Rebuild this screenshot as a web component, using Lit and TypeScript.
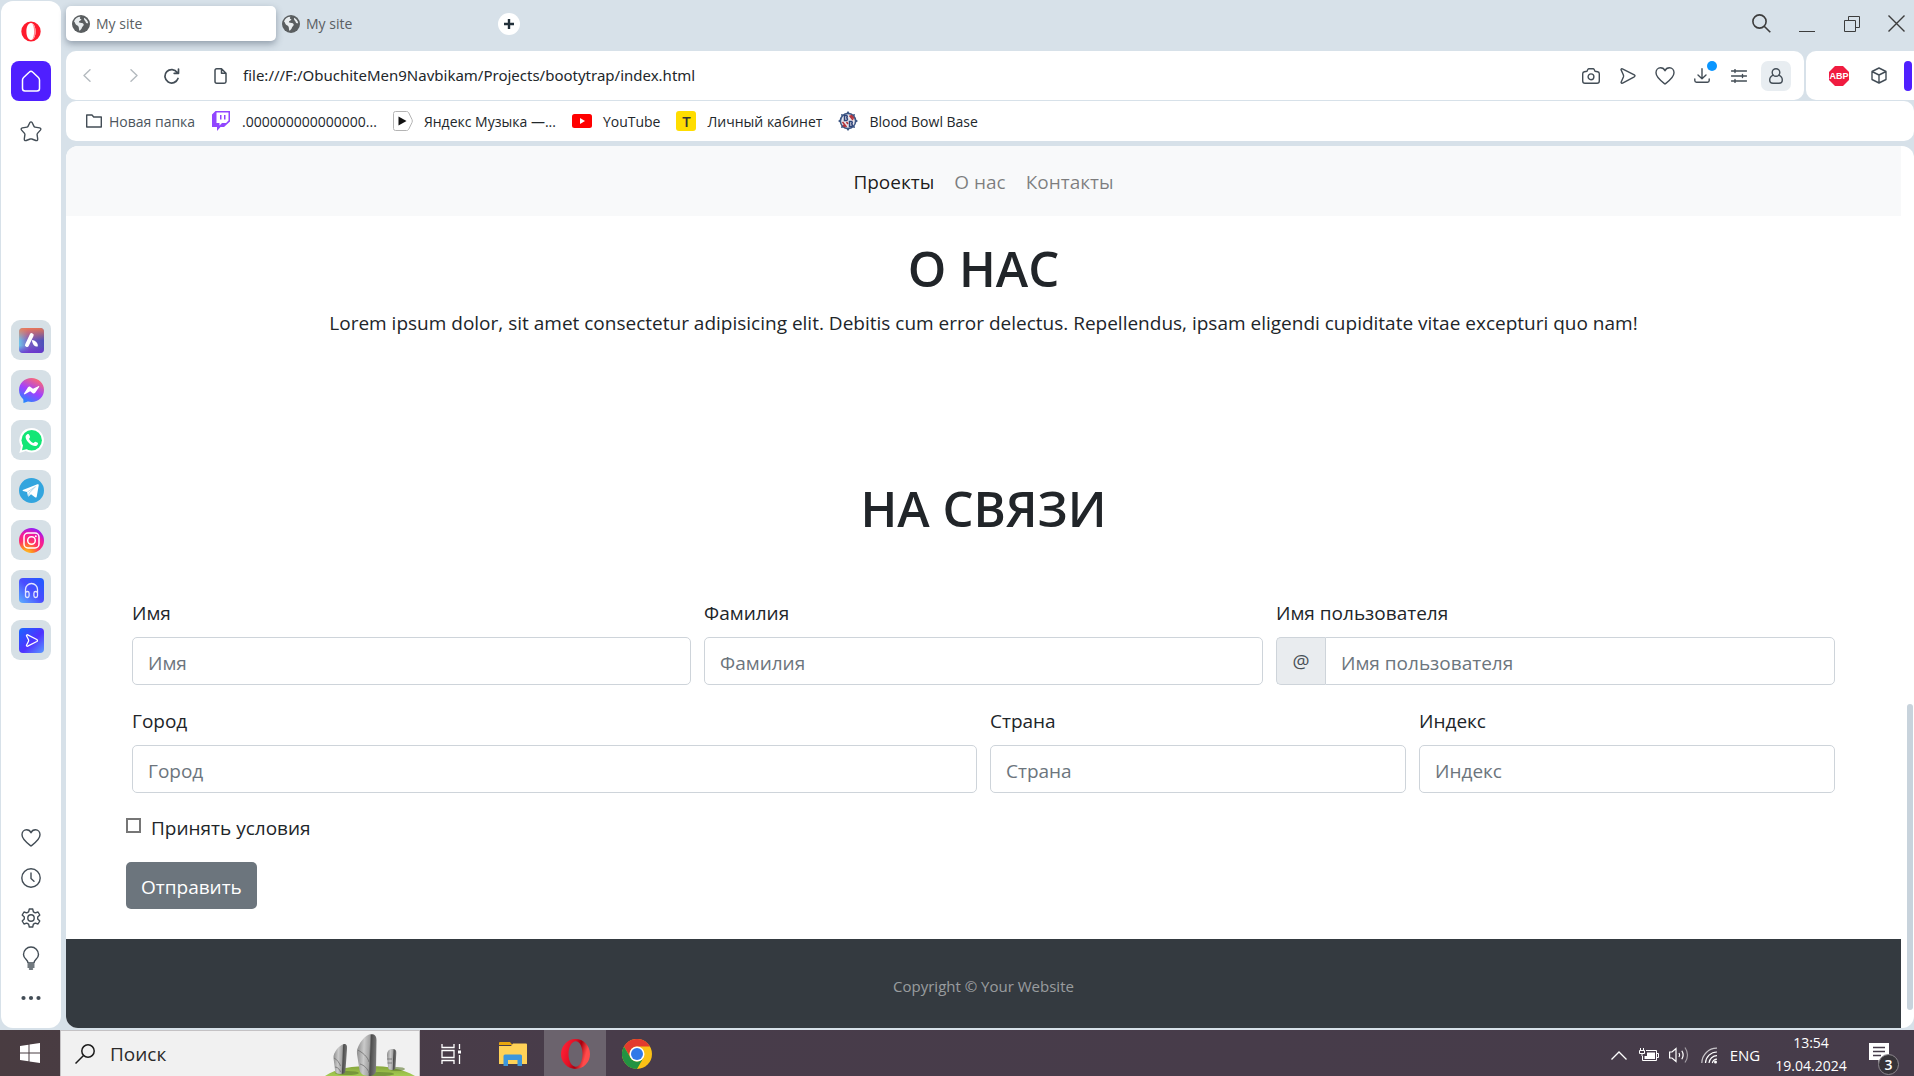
import { LitElement, html, css, TemplateResult } from "lit";
import { customElement } from "lit/decorators.js";

/* ---------- shared styles ---------- */

const base = css`
  *,
  *::before,
  *::after {
    box-sizing: border-box;
  }
  :host {
    font-family: "Open Sans", "Noto Sans", "Liberation Sans", sans-serif;
  }
  button,
  input {
    font: inherit;
    color: inherit;
    margin: 0;
  }
  button {
    border: 0;
    padding: 0;
    background: none;
  }
  a {
    color: inherit;
    text-decoration: none;
  }
  svg {
    display: block;
    flex: none;
  }
  .line {
    fill: none;
    stroke: #434d56;
    stroke-width: 1.4;
    stroke-linecap: round;
    stroke-linejoin: round;
  }
`;

/* ---------- icons ---------- */

const heart = html`<svg class="line" width="20" height="20" viewBox="0 0 20 20">
  <path d="M10 18C6 15 1 11.500 1 6.800C1 3.800 3 1.800 5.500 1.800C7.500 1.800 9.300 3 10 4.800C10.700 3 12.500 1.800 14.500 1.800C17 1.800 19 3.800 19 6.800C19 11.500 14 15 10 18Z" />
</svg>`;

const globe = html`<svg width="18" height="18" viewBox="0 0 18 18">
  <circle cx="9" cy="9" r="9" fill="#5a5e60" />
  <path fill="#e9edef" d="M2 6.500C3 3.500 5.500 1.800 8.500 1.700C7.200 3 8 4 9.500 4.300C8.800 6 7 5.600 6.800 7.200C8.500 8 11 7.500 11.700 9.300C12 10.800 10.400 11.200 10 12.600C9.700 14 8.600 15 7.800 15.800C6.500 15.500 7.300 13 6.600 11.700C5.800 10.300 4 10.300 3.400 8.800C3 7.900 2.800 7 2 6.500Z" />
  <path fill="#e9edef" d="M12 2.700C14.300 3.700 15.900 5.700 16.200 8.200C15.200 8.700 13.900 8 13.600 6.800C13.400 5.600 11.600 5.300 12 2.700Z" />
</svg>`;

const operaO = html`<svg width="20" height="21" viewBox="0 0 20 21">
  <path fill="#ff1b2d" fill-rule="evenodd" d="M10 0.500A9.700 10 0 0 1 10 20.500A9.700 10 0 0 1 10 0.500ZM10 2C7.200 2 5.400 5.800 5.400 10.500S7.200 19 10 19S14.600 15.200 14.600 10.500S12.800 2 10 2Z" />
  <path fill="#ff8a94" d="M11 2.200C13.200 3.200 14.600 6.500 14.600 10.500S13.200 17.800 11 18.800C12.300 17 13.100 14 13.100 10.500S12.300 4 11 2.200Z" />
</svg>`;

const house = html`<svg width="20" height="22" viewBox="0 0 20 22" fill="none" stroke="#fff" stroke-width="1.500" stroke-linejoin="round">
  <path d="M1.500 10C1.500 9 1.900 8.200 2.600 7.500L8.400 2C9.400 1 10.600 1 11.600 2L17.400 7.500C18.100 8.200 18.500 9 18.500 10V18.500C18.500 20 17.500 21 16 21H4C2.500 21 1.500 20 1.500 18.500Z" />
</svg>`;

const star = html`<svg class="line" width="22" height="21" viewBox="0 0 22 21">
  <path d="M9.800 1.700Q11 0 12.200 1.700L14 5.400Q14.300 6 15 6.100L19.600 6.900Q21.600 7.400 20.400 9.100L17.500 12.400Q17 13 17.100 13.700L17.700 18Q17.700 20 15.800 19.500L11.800 18Q11 17.700 10.200 18L6.200 19.500Q4.300 20 4.300 18L4.900 13.700Q5 13 4.500 12.400L1.600 9.100Q0.400 7.400 2.400 6.900L7 6.100Q7.700 6 8 5.400Z" />
</svg>`;

const aria = html`<svg width="25" height="25" viewBox="0 0 25 25">
  <defs>
    <linearGradient id="ariaA" x1="0" y1="0.600" x2="1" y2="0.500">
      <stop offset="0" stop-color="#6fc6e8" />
      <stop offset="0.400" stop-color="#7a5cc4" />
      <stop offset="1" stop-color="#4b50b8" />
    </linearGradient>
    <linearGradient id="ariaB" x1="0.500" y1="0" x2="0.500" y2="1">
      <stop offset="0" stop-color="#ff7a45" />
      <stop offset="0.500" stop-color="#ff7a45" stop-opacity="0" />
      <stop offset="0.700" stop-color="#6a2fd0" stop-opacity="0" />
      <stop offset="1" stop-color="#6a2fd0" />
    </linearGradient>
  </defs>
  <rect width="25" height="25" rx="4" fill="url(#ariaA)" />
  <rect width="25" height="25" rx="4" fill="url(#ariaB)" opacity="0.850" />
  <path d="M12.700 7.200L8 17" stroke="#fff" stroke-width="4" stroke-linecap="round" />
  <path d="M12.800 12C16 12.200 19.500 15 18.700 18.600C15.500 18.800 13.500 16.500 12.800 12Z" fill="#fff" />
</svg>`;

const messenger = html`<svg width="25" height="25" viewBox="0 0 25 25">
  <defs>
    <linearGradient id="msg" x1="0.200" y1="1" x2="0.700" y2="0">
      <stop offset="0" stop-color="#1a8dff" />
      <stop offset="0.500" stop-color="#a040ff" />
      <stop offset="1" stop-color="#ff6a70" />
    </linearGradient>
  </defs>
  <path fill="url(#msg)" d="M12.500 0C19.500 0 25 5.200 25 12S19.500 24 12.500 24C11.200 24 10 23.800 8.900 23.500L4.500 25C4.300 23.800 4.600 22.300 4.200 21.200C1.600 19 0 15.800 0 12C0 5.200 5.500 0 12.500 0Z" />
  <path fill="#fff" d="M5 15.500L9 9.300C9.600 8.500 10.700 8.300 11.500 8.900L14 10.800L19.300 8.200C20 7.900 20.500 8.500 20.100 9.100L16.200 14.800C15.600 15.700 14.500 15.900 13.700 15.200L11.200 13.300L5.900 16.300C5.200 16.600 4.700 16 5 15.500Z" />
</svg>`;

const whatsapp = html`<svg width="25" height="25" viewBox="0 0 25 25">
  <path fill="#fff" d="M12.700 0A12.200 12.200 0 1 1 6.800 22.900L0.300 25L2.100 18.500A12.200 12.200 0 0 1 12.700 0Z" />
  <circle cx="12.700" cy="12.200" r="10.200" fill="#12e676" />
  <path fill="#12e676" d="M3 22.300L4.300 16L8.500 21Z" />
  <path fill="#fff" d="M8.200 6.300C9 5.700 9.800 5.900 10.200 6.800L11 8.800C11.200 9.500 10.300 10.400 10 10.900C11 12.900 12.500 14.200 14.500 15.100C15.200 14.500 15.800 13.500 16.500 13.700L18.700 14.800C19.500 15.300 18.700 17.200 17.600 17.800C15.600 18.700 12.500 17.500 10.200 15.300C7.800 13 6.300 10.400 6.600 8.500C6.800 7.500 7.500 6.800 8.200 6.300Z" />
</svg>`;

const telegram = html`<svg width="25" height="25" viewBox="0 0 25 25">
  <circle cx="12.500" cy="12.500" r="12.500" fill="#33a5de" />
  <path fill="#fff" d="M3.800 12.100L18.400 6.300C19.300 6 19.900 6.500 19.700 7.600L17.700 18.700C17.500 19.600 16.800 19.800 16 19.300L12 16.300L9.900 18.300C9.500 18.700 9 18.500 8.900 18L8 14L4 12.900C3.400 12.700 3.400 12.300 3.800 12.100Z" />
  <path stroke="#b9d9ea" d="M8.300 14L16.500 8.700L10.300 15L9.500 18" fill="none" />
</svg>`;

const instagram = html`<svg width="25" height="25" viewBox="0 0 25 25">
  <defs>
    <radialGradient id="insta" cx="0.300" cy="1.050" r="1.100">
      <stop offset="0" stop-color="#ffd02e" />
      <stop offset="0.250" stop-color="#ff8a1f" />
      <stop offset="0.500" stop-color="#ff2f6a" />
      <stop offset="0.750" stop-color="#f11aa0" />
      <stop offset="1" stop-color="#8a1cff" />
    </radialGradient>
  </defs>
  <circle cx="12.500" cy="12.500" r="12.500" fill="url(#insta)" />
  <g fill="none" stroke="#fff" stroke-width="1.500">
    <rect x="5" y="5" width="15" height="15" rx="4" />
    <circle cx="12.500" cy="12.500" r="3.800" />
  </g>
  <circle cx="16.800" cy="8.200" r="1" fill="#fff" />
</svg>`;

const headphones = html`<svg width="25" height="25" viewBox="0 0 25 25">
  <defs>
    <linearGradient id="blueA" x1="0" y1="1" x2="1" y2="0">
      <stop offset="0" stop-color="#5cb2ff" />
      <stop offset="0.500" stop-color="#4a4cff" />
      <stop offset="1" stop-color="#1c5cff" />
    </linearGradient>
  </defs>
  <rect width="25" height="25" rx="4" fill="url(#blueA)" />
  <g fill="none" stroke="#e3e6ff" stroke-width="1.300">
    <path d="M6.500 15V11.500A6 6 0 0 1 18.500 11.500V15" />
    <rect x="6.500" y="13.500" width="3.600" height="6" rx="1.700" />
    <rect x="14.900" y="13.500" width="3.600" height="6" rx="1.700" />
  </g>
</svg>`;

const flow = html`<svg width="25" height="25" viewBox="0 0 25 25">
  <defs>
    <linearGradient id="blueB" x1="0" y1="0" x2="1" y2="1">
      <stop offset="0" stop-color="#1768ff" />
      <stop offset="0.550" stop-color="#5032ff" />
      <stop offset="1" stop-color="#5a9bff" />
    </linearGradient>
  </defs>
  <rect width="25" height="25" rx="4" fill="url(#blueB)" />
  <path fill="none" stroke="#fff" stroke-width="1.300" stroke-linejoin="round" d="M7.500 7.800C7.300 7 8 6.600 8.700 6.800L17.800 11.500C18.700 12 18.700 13 17.800 13.500L8.700 18.200C8 18.500 7.300 18 7.500 17.200L9.500 13.300C9.800 12.700 9.800 12.300 9.500 11.700Z" />
</svg>`;

const clock = html`<svg class="line" width="20" height="20" viewBox="0 0 20 20">
  <circle cx="10" cy="10" r="9.200" /><path d="M10 5V10.500L13 13.200" />
</svg>`;

const gear = html`<svg class="line" width="20" height="20" viewBox="0 0 20 20">
  <circle cx="10" cy="10" r="3.200" />
  <path d="M8.300 1H11.700L12.400 3.800L14.300 4.900L17 4L18.800 7L16.700 9V11L18.800 13L17 16L14.300 15.100L12.400 16.200L11.700 19H8.300L7.600 16.200L5.700 15.100L3 16L1.200 13L3.300 11V9L1.200 7L3 4L5.700 4.900L7.600 3.800Z" />
</svg>`;

const bulb = html`<svg class="line" width="18" height="24" viewBox="0 0 18 24">
  <path d="M6 17C6 13.500 1.500 13 1.500 8.500A7.500 7.500 0 0 1 16.500 8.500C16.500 13 12 13.500 12 17Z" />
  <path d="M6 19H12M6 21H12M7.500 23H10.500" />
</svg>`;

const dots = html`<svg width="20" height="6" viewBox="0 0 20 6" fill="#434d56">
  <circle cx="2.500" cy="3" r="2.100" /><circle cx="10" cy="3" r="2.100" /><circle cx="17.500" cy="3" r="2.100" />
</svg>`;

/* ---------- left browser panel ---------- */

@customElement("side-panel")
class SidePanel extends LitElement {
  static styles = [
    base,
    css`
      :host {
        display: flex;
        flex-direction: column;
        align-items: center;
        background: #fff;
        border-radius: 12px;
        padding: 10px 0;
      }
      .item {
        width: 40px;
        height: 40px;
        display: flex;
        align-items: center;
        justify-content: center;
      }
      .group {
        display: flex;
        flex-direction: column;
        gap: 10px;
      }
      .home {
        background: #4f1fff;
        border-radius: 8px;
      }
      .apps {
        margin-top: 169px;
      }
      .app {
        background: #d6e0e6;
        border-radius: 9px;
      }
      .tools {
        margin-top: auto;
        gap: 0;
      }
    `,
  ];

  render() {
    const apps: [string, TemplateResult][] = [
      ["Aria", aria],
      ["Messenger", messenger],
      ["WhatsApp", whatsapp],
      ["Telegram", telegram],
      ["Instagram", instagram],
      ["Player", headphones],
      ["Flow", flow],
    ];
    const tools: [string, TemplateResult][] = [
      ["Favorites", heart],
      ["History", clock],
      ["Settings", gear],
      ["Tips", bulb],
      ["More", dots],
    ];
    return html`
      <div class="group">
        <button class="item" aria-label="Opera">${operaO}</button>
        <button class="item home" aria-label="Home">${house}</button>
        <button class="item" aria-label="Bookmarks">${star}</button>
      </div>
      <div class="group apps">
        ${apps.map(([n, i]) => html`<button class="item app" aria-label=${n}>${i}</button>`)}
      </div>
      <div class="group tools">
        ${tools.map(([n, i]) => html`<button class="item" aria-label=${n}>${i}</button>`)}
      </div>
    `;
  }
}

/* ---------- tabs, address bar, bookmarks ---------- */

@customElement("browser-chrome")
class BrowserChrome extends LitElement {
  static styles = [
    base,
    css`
      :host {
        display: flex;
        flex-direction: column;
        color: #22272b;
      }
      .tabs {
        display: flex;
        align-items: center;
        height: 51px;
        padding: 0 0 4px;
      }
      .tab {
        display: flex;
        align-items: center;
        gap: 6px;
        width: 210px;
        height: 35px;
        padding-left: 6px;
        font-size: 14px;
        color: #5a5f63;
        border-radius: 5px;
      }
      .active {
        background: #fff;
        box-shadow: 0 3px 7px rgba(60, 75, 95, 0.45);
      }
      .plus {
        width: 22px;
        height: 22px;
        border-radius: 50%;
        background: #fff;
        display: flex;
        align-items: center;
        justify-content: center;
        margin-left: 12px;
      }
      .window {
        display: flex;
        gap: 10px;
        margin-left: auto;
      }
      .window button {
        width: 35px;
        height: 40px;
        display: flex;
        align-items: center;
        justify-content: center;
      }
      .window .line {
        stroke: #3c3c3c;
        stroke-linecap: butt;
        stroke-linejoin: miter;
      }
      .bar {
        display: flex;
        gap: 2px;
        height: 49px;
      }
      .address {
        flex: 1;
        display: flex;
        align-items: center;
        background: #fff;
        border-radius: 10px;
        padding-right: 13px;
      }
      .nav {
        width: 38px;
        height: 36px;
        display: flex;
        align-items: center;
        justify-content: center;
      }
      .back {
        margin: 0 9px 0 2px;
      }
      .file {
        margin-left: 10px;
      }
      .off .line {
        stroke: #b4babf;
      }
      .url {
        flex: 1;
        border: 0;
        outline: 0;
        padding: 0 4px 1px;
        font-family: "Noto Sans", "Open Sans", sans-serif;
        font-size: 15px;
        background: none;
        min-width: 0;
      }
      .actions {
        display: flex;
        gap: 7px;
      }
      .action {
        width: 30px;
        height: 30px;
        display: flex;
        align-items: center;
        justify-content: center;
        border-radius: 7px;
        position: relative;
      }
      .user {
        background: #e8edf1;
      }
      .dot {
        position: absolute;
        top: 0;
        right: 0;
        width: 10px;
        height: 10px;
        border-radius: 50%;
        background: #0a96ff;
      }
      .extra {
        width: 108px;
        background: #fff;
        border-radius: 10px 0 0 10px;
        display: flex;
        align-items: center;
        gap: 10px;
        padding-left: 18px;
      }
      .accent {
        width: 8px;
        height: 30px;
        border-radius: 4px;
        background: #4f1fff;
      }
      .marks {
        display: flex;
        align-items: center;
        gap: 16px;
        height: 40px;
        margin-top: 1px;
        padding-left: 20px;
        background: #fff;
        border-radius: 10px;
        font-size: 14px;
      }
      .mark {
        display: flex;
        align-items: center;
        gap: 11px;
        white-space: nowrap;
      }
      .folder {
        gap: 7px;
        color: #4c555d;
      }
      .badge-t {
        width: 20px;
        height: 20px;
        border-radius: 3px;
        background: #ffdd00;
        color: #333;
        font-size: 15px;
        line-height: 20px;
        font-weight: 600;
        text-align: center;
      }
      .abp {
        font: bold 9px "Liberation Sans", sans-serif;
        fill: #fff;
      }
    `,
  ];

  render() {
    return html`
      <div class="tabs">
        <button class="tab active">${globe}My site</button>
        <button class="tab">${globe}My site</button>
        <button class="plus" aria-label="New tab">
          <svg width="10" height="10" viewBox="0 0 10 10" stroke="#22303a" stroke-width="2.400"><path d="M5 0V10M0 5H10" /></svg>
        </button>
        <div class="window">
          <button aria-label="Search tabs">
            <svg class="line" width="19" height="19" viewBox="0 0 19 19"><circle cx="7.500" cy="7.500" r="6.600" stroke-width="1.600" /><path d="M12.200 12.200L18.300 18.300" stroke-width="1.600" /></svg>
          </button>
          <button aria-label="Minimize">
            <svg class="line" width="16" height="16" viewBox="0 0 16 16"><path d="M0 15.500H16" stroke-width="1" /></svg>
          </button>
          <button aria-label="Restore">
            <svg class="line" width="16" height="16" viewBox="0 0 16 16"><path d="M0.500 4.500H11.500V15.500H0.500ZM4.500 4.500V0.500H15.500V11.500H11.500" stroke-width="1" /></svg>
          </button>
          <button aria-label="Close">
            <svg class="line" width="17" height="17" viewBox="0 0 17 17"><path d="M0.500 0.500L16.500 16.500M16.500 0.500L0.500 16.500" /></svg>
          </button>
        </div>
      </div>
      <div class="bar">
        <div class="address">
          <button class="nav back off" aria-label="Back">
            <svg class="line" width="8" height="13" viewBox="0 0 8 13"><path d="M7 0.700L1 6.500L7 12.300" /></svg>
          </button>
          <button class="nav off" aria-label="Forward">
            <svg class="line" width="8" height="13" viewBox="0 0 8 13"><path d="M1 0.700L7 6.500L1 12.300" /></svg>
          </button>
          <button class="nav" aria-label="Reload">
            <svg class="line" width="16" height="16" viewBox="0 0 16 16"><path d="M14 10.500A6.700 6.700 0 1 1 13.200 4.500M14.500 1V5.300H10.200" stroke-width="1.700" /></svg>
          </button>
          <button class="nav file" aria-label="File">
            <svg class="line" width="13" height="16" viewBox="0 0 13 16"><path d="M1 2.500Q1 0.800 2.700 0.800H7.500L12 5.300V13.500Q12 15.200 10.300 15.200H2.700Q1 15.200 1 13.500ZM7.500 0.800V5.300H12" stroke-width="1.500" /></svg>
          </button>
          <input class="url" type="text" aria-label="Address" value="file:///F:/ObuchiteMen9Navbikam/Projects/bootytrap/index.html" />
          <div class="actions">
            <button class="action" aria-label="Snapshot">
              <svg class="line" width="18" height="16" viewBox="0 0 18 16"><path d="M0.700 5.700Q0.700 4 2.400 3.700L5 3.200L5.800 1.500Q6.200 0.700 7 0.700H11Q11.800 0.700 12.200 1.500L13 3.200L15.600 3.700Q17.300 4 17.300 5.700V13Q17.300 15.200 15 15.200H3Q0.700 15.200 0.700 13Z" /><circle cx="9" cy="8.800" r="2.900" /></svg>
            </button>
            <button class="action" aria-label="Send">
              <svg class="line" width="16" height="16" viewBox="0 0 16 16"><path d="M1 1.600Q1.200 0.500 2.400 0.900L14.300 6.900Q15.700 7.800 14.300 8.800L2.600 15.100Q1.300 15.500 1.100 14.300L3.400 9Q3.700 8 3.400 7Z" /></svg>
            </button>
            <button class="action" aria-label="Favorite">${heart}</button>
            <button class="action" aria-label="Downloads">
              <svg class="line" width="16" height="15" viewBox="0 0 16 15"><path d="M8 0.700V10.500M4 7L8 10.700L12 7M0.800 11V12.500Q0.800 14.200 2.500 14.200H13.500Q15.200 14.200 15.200 12.500V11" /></svg>
              <span class="dot"></span>
            </button>
            <button class="action" aria-label="Easy setup">
              <svg class="line" width="16" height="14" viewBox="0 0 16 14"><path d="M0.500 2H15.500M0.500 7H15.500M0.500 12H15.500M4 0.500V3.500M11.500 5.500V8.500M4 10.500V13.500" /></svg>
            </button>
            <button class="action user" aria-label="Profile">
              <svg class="line" width="14" height="16" viewBox="0 0 14 16"><circle cx="7" cy="4.500" r="3.800" /><path d="M4.200 7.200C2 8.200 0.700 10 0.700 12Q0.700 15.200 4 15.200H10Q13.300 15.200 13.300 12C13.300 10 12 8.200 9.800 7.200" /></svg>
            </button>
          </div>
        </div>
        <div class="extra">
          <button class="action" aria-label="Adblock Plus">
            <svg width="20" height="20" viewBox="0 0 20 20"><path d="M6 0H14L20 6V14L14 20H6L0 14V6Z" fill="#f01c40" /><text class="abp" x="10" y="13" text-anchor="middle">ABP</text></svg>
          </button>
          <button class="action" aria-label="Extensions">
            <svg class="line" width="16" height="17" viewBox="0 0 16 17"><path d="M8 1L15 4.500V12.500L8 16L1 12.500V4.500ZM1 4.500L8 8L15 4.500M8 8V16" /></svg>
          </button>
          <span class="accent"></span>
        </div>
      </div>
      <nav class="marks">
        <a class="mark folder" href="#folder">
          <svg class="line" width="16" height="14" viewBox="0 0 16 14"><path d="M0.700 1H6L7.700 3H15.300V13H0.700Z" /></svg>Новая папка</a>
        <a class="mark" href="#twitch">
          <svg width="20" height="20" viewBox="0 0 20 20"><path fill="#9146ff" d="M4.500 0H19V10.500L13 16H9.500L6 20V16H1V3.500Z" /><path fill="#fff" d="M5.500 1.500H17.500V9.500L15 12H11L8.500 14.500V12H5.500Z" /><path fill="#9146ff" d="M9 4H10.500V8.500H9ZM13 4H14.500V8.500H13Z" /></svg>.000000000000000...</a>
        <a class="mark" href="#music">
          <svg width="20" height="20" viewBox="0 0 20 20"><path fill="#fff" stroke="#b4b4b4" d="M2.500 0.500H13.500Q15 0.500 15.700 1.700L19 8.500Q19.700 10 19 11.500L15.700 18.300Q15 19.500 13.500 19.500H2.500Q0.500 19.500 0.500 17.500V2.500Q0.500 0.500 2.500 0.500Z" /><path fill="#111" d="M5.500 5.500L13.500 10L5.500 14.500Z" /></svg>Яндекс Музыка —...</a>
        <a class="mark" href="#youtube">
          <svg width="20" height="14" viewBox="0 0 20 14"><rect width="20" height="14" rx="2.500" fill="#f00" /><path fill="#fff" d="M8 4L13 7L8 10Z" /></svg>YouTube</a>
        <a class="mark" href="#account"><span class="badge-t">T</span>Личный кабинет</a>
        <a class="mark" href="#bloodbowl">
          <svg width="20" height="20" viewBox="0 0 20 20">
            <path fill="#3c5684" d="M10 0L11.500 2H8.500ZM10 20L8.500 18H11.500ZM0 10L2 8.500V11.500ZM20 10L18 11.500V8.500ZM3 3L5.200 3.500L3.500 5.200ZM17 3L16.500 5.200L14.800 3.500ZM3 17L3.500 14.800L5.200 16.500ZM17 17L14.800 16.500L16.500 14.800Z" />
            <circle cx="10" cy="10" r="7.600" fill="#e7e4ea" stroke="#3c5684" stroke-width="1.500" />
            <path fill="none" stroke="#2d447a" stroke-width="1.500" d="M6.500 4.500V9.500H8.500Q10.500 8.300 8.700 7Q10 5 8.300 4.500ZM11.500 10.500V15.500H13.500Q15.300 14.300 13.600 13Q15 11 13.300 10.500Z" />
            <path fill="none" stroke="#b3343c" stroke-width="1.500" d="M11.500 4.500L15 9M13 4L16 7.500M4.500 11L8.500 16M8.500 11L10 13M5 14L7 16" />
          </svg>Blood Bowl Base</a>
      </nav>
    `;
  }
}

/* ---------- the opened site ---------- */

@customElement("site-page")
class SitePage extends LitElement {
  static styles = [
    base,
    css`
      :host {
        display: flex;
        background: #fff;
        border-radius: 12px;
        overflow: hidden;
        font-size: 19px;
        line-height: 30px;
        color: #212529;
      }
      .body {
        flex: 1;
        display: flex;
        flex-direction: column;
        min-width: 0;
      }
      .track {
        width: 13px;
        padding: 558px 1px 18px 6px;
        display: flex;
      }
      .thumb {
        flex: 1;
        border-radius: 3px;
        background: #c8d3dc;
      }
      .menu {
        display: flex;
        justify-content: center;
        gap: 20px;
        padding: 21px 0 19px;
        background: #f8f9fa;
      }
      .menu a {
        color: rgba(0, 0, 0, 0.5);
      }
      .menu .current {
        color: rgba(0, 0, 0, 0.9);
      }
      h1 {
        margin: 0;
        font-size: 49px;
        line-height: 60px;
        font-weight: 600;
        text-align: center;
      }
      .about {
        padding: 22px 20px 0;
      }
      .about p {
        margin: 10px 0 0;
        text-align: center;
      }
      .contact {
        padding: 140px 66px 30px;
      }
      form {
        padding: 60px 0 0;
        margin: 0 -6px;
      }
      .row {
        display: grid;
        gap: 13px;
        padding: 0 6px;
        margin-bottom: 21px;
      }
      .three {
        grid-template-columns: repeat(3, 1fr);
      }
      .four {
        grid-template-columns: repeat(4, 1fr);
        margin-bottom: 20px;
      }
      .wide {
        grid-column: span 2;
      }
      .field {
        display: flex;
        flex-direction: column;
        gap: 9px;
        min-width: 0;
      }
      .text {
        width: 100%;
        min-width: 0;
        height: 48px;
        border: 1px solid #ced4da;
        border-radius: 5px;
        padding: 3px 15px 0;
        background: #fff;
      }
      .text::placeholder {
        color: #6c757d;
        opacity: 1;
      }
      .group {
        display: flex;
      }
      .at {
        width: 49px;
        flex: none;
        display: flex;
        align-items: center;
        justify-content: center;
        background: #e9ecef;
        color: #495057;
        border: 1px solid #ced4da;
        border-right: 0;
        border-radius: 5px 0 0 5px;
      }
      .group .text {
        border-radius: 0 5px 5px 0;
      }
      .check {
        display: flex;
        align-items: center;
        gap: 10px;
      }
      .box {
        appearance: none;
        width: 15px;
        height: 15px;
        margin-bottom: 5px;
        border: 2px solid #767676;
        background: #fff;
      }
      .send {
        margin-top: 19px;
        height: 47px;
        padding: 3px 15px 0;
        border-radius: 5px;
        background: #6c757d;
        color: #fff;
      }
      footer {
        flex: 1;
        min-height: 88px;
        display: flex;
        align-items: center;
        justify-content: center;
        padding-top: 4px;
        background: #343a40;
        color: rgba(255, 255, 255, 0.5);
        font-size: 15px;
      }
    `,
  ];

  private field(id: string, name: string, wide = false) {
    return html`<div class="field ${wide ? "wide" : ""}">
      <label for=${id}>${name}</label>
      <input class="text" id=${id} type="text" placeholder=${name} />
    </div>`;
  }

  render() {
    return html`
      <div class="body">
        <nav class="menu">
          <a class="current" href="#projects">Проекты</a>
          <a href="#about">О нас</a>
          <a href="#contacts">Контакты</a>
        </nav>
        <section class="about" id="about">
          <h1>О НАС</h1>
          <p>Lorem ipsum dolor, sit amet consectetur adipisicing elit. Debitis cum error delectus. Repellendus, ipsam eligendi cupiditate vitae excepturi quo nam!</p>
        </section>
        <section class="contact" id="contacts">
          <h1>НА СВЯЗИ</h1>
          <form @submit=${(e: Event) => e.preventDefault()}>
            <div class="row three">
              ${this.field("first", "Имя")} ${this.field("last", "Фамилия")}
              <div class="field">
                <label for="user">Имя пользователя</label>
                <div class="group">
                  <span class="at">@</span>
                  <input class="text" id="user" type="text" placeholder="Имя пользователя" />
                </div>
              </div>
            </div>
            <div class="row four">
              ${this.field("city", "Город", true)} ${this.field("country", "Страна")} ${this.field("zip", "Индекс")}
            </div>
            <div class="check">
              <input class="box" id="terms" type="checkbox" />
              <label for="terms">Принять условия</label>
            </div>
            <button class="send" type="submit">Отправить</button>
          </form>
        </section>
        <footer>Copyright © Your Website</footer>
      </div>
      <div class="track"><span class="thumb"></span></div>
    `;
  }
}

/* ---------- system taskbar ---------- */

@customElement("task-bar")
class TaskBar extends LitElement {
  static styles = [
    base,
    css`
      :host {
        display: flex;
        height: 46px;
        color: #fff;
        font-size: 14px;
        background: linear-gradient(90deg, #493c41, #483c4a 30%, #463c4a);
      }
      .start {
        width: 60px;
      }
      .start,
      .app {
        display: flex;
        align-items: center;
        justify-content: center;
      }
      .search {
        width: 360px;
        display: flex;
        align-items: center;
        gap: 15px;
        padding: 0 4px 0 14px;
        background: #f1f1f1;
        border: 1px solid #c4c2c4;
        border-bottom: 0;
        color: #2b2b2b;
      }
      .query {
        flex: 1;
        min-width: 0;
        border: 0;
        outline: 0;
        padding: 0;
        background: none;
        font-size: 19px;
      }
      .query::placeholder {
        color: #2b2b2b;
        opacity: 1;
      }
      .art {
        align-self: flex-end;
      }
      .app {
        width: 62px;
        padding-top: 2px;
      }
      .running {
        background: #6b636d;
      }
      .tray {
        margin-left: auto;
        display: flex;
        align-items: center;
        padding-right: 14px;
      }
      .mini {
        width: 30px;
        height: 46px;
        padding-top: 4px;
        display: flex;
        align-items: center;
        justify-content: center;
      }
      .lang {
        padding: 3px 0 0;
        width: 42px;
        text-align: center;
        font-size: 15px;
      }
      .clock {
        width: 74px;
        margin-left: 8px;
        padding-top: 2px;
        line-height: 23px;
        text-align: center;
      }
      .notes {
        position: relative;
        margin-left: 19px;
        width: 33px;
        height: 46px;
      }
      .notes svg {
        margin: -1px 0 0 2px;
      }
      .count {
        position: absolute;
        right: 1px;
        bottom: 1px;
        width: 21px;
        height: 21px;
        border-radius: 50%;
        border: 1px solid #8c878d;
        background: #363338;
        line-height: 19px;
        font-size: 14px;
        font-weight: 600;
        text-align: center;
      }
    `,
  ];

  render() {
    return html`
      <button class="start" aria-label="Start">
        <svg width="20" height="20" viewBox="0 0 20 20" fill="#fff"><path d="M0 3L8.500 1.700V9.500H0ZM9.500 1.500L20 0V9.500H9.500ZM0 10.500H8.500V18.300L0 17ZM9.500 10.500H20V20L9.500 18.500Z" /></svg>
      </button>
      <div class="search">
        <svg width="20" height="20" viewBox="0 0 20 20" fill="none" stroke="#1c1c1c" stroke-width="1.500"><circle cx="13" cy="7" r="6.200" /><path d="M8.500 11.500L0.500 19.500" /></svg>
        <input class="query" type="text" aria-label="Поиск" placeholder="Поиск" />
        <svg class="art" width="90" height="44" viewBox="0 0 90 44">
          <defs>
            <linearGradient id="leaf" x1="0" y1="0.400" x2="1" y2="0.500">
              <stop offset="0" stop-color="#8f8f8f" />
              <stop offset="0.350" stop-color="#cacaca" />
              <stop offset="0.620" stop-color="#a3a3a3" />
              <stop offset="0.700" stop-color="#4d4d4d" />
              <stop offset="1" stop-color="#7d7d7d" />
            </linearGradient>
            <linearGradient id="hill" x1="0" y1="0" x2="0" y2="1">
              <stop offset="0" stop-color="#86a53c" />
              <stop offset="1" stop-color="#a5cc52" />
            </linearGradient>
          </defs>
          <path fill="url(#hill)" d="M0 44C12 36 28 34 46 34C62 34 78 37 90 44Z" />
          <ellipse cx="22" cy="41" rx="12" ry="2" fill="#5f7a31" opacity="0.600" />
          <ellipse cx="54" cy="42" rx="15" ry="2" fill="#5f7a31" opacity="0.600" />
          <ellipse cx="72" cy="37" rx="8" ry="2" fill="#5f7a31" opacity="0.600" />
          <path fill="url(#leaf)" d="M19 12C21 11.500 22.500 13 22 17L20.500 38C20.500 41 19 42 16 42C12 42 10 41 10 38L8.500 26C8 21 14 13 19 12Z" />
          <path fill="url(#leaf)" d="M44 2.500C49 1.500 51.500 3 51.500 8L51 38C51 42 48 44 44 44C38 44 35 41 34.500 38L32 22C31 15 38 5 44 2.500Z" />
          <path fill="url(#leaf)" d="M66 17C70 16.500 71.500 17.500 71.300 21L70.500 35C70.500 37.500 69 38 66.500 38C64 38 63 37 63 35L62 24C62 20 63 18 66 17Z" />
          <path fill="none" stroke="#6f6f6f" stroke-width="1" opacity="0.800" d="M9 26C12 27 15 32 15.500 34M10 35C13 35 15 38 15.500 40M32.500 18C37 20 43 25 44 30M35 32C39 33 43 37 44 41M62 27H67M62.500 31H67" />
        </svg>
      </div>
      <button class="app" aria-label="Task view">
        <svg width="20" height="20" viewBox="0 0 20 20" fill="none" stroke="#fff" stroke-width="1.300"><path d="M1 0V3.500H13V0M1 6.500H13V13.500H1ZM1 20V16.500H13V20M18.500 0V5M18.500 11V20" /><path d="M17 8H20" stroke-width="3" /></svg>
      </button>
      <button class="app" aria-label="Explorer">
        <svg width="28" height="24" viewBox="0 0 28 24">
          <path fill="#e8a50c" d="M0 1Q0 0 1 0H11L13.500 3H0Z" />
          <path fill="#ffd257" d="M0 4H12L14 1.500H27Q28 1.500 28 2.500V22H0Z" />
          <path fill="#3d97dc" d="M4.500 14Q4.500 12.500 6 12.500H21.500Q23 12.500 23 14V24H18.500V18H9V24H4.500Z" />
        </svg>
      </button>
      <button class="app running" aria-label="Opera">
        <svg width="29" height="30" viewBox="0 0 29 30">
          <defs><linearGradient id="op" x1="0" x2="1" y1="0.300" y2="0.600"><stop offset="0" stop-color="#ff2035" /><stop offset="0.400" stop-color="#e01025" /><stop offset="0.600" stop-color="#a8000e" /><stop offset="0.850" stop-color="#ff4b4b" /></linearGradient></defs>
          <path fill="url(#op)" fill-rule="evenodd" d="M14.500 0A14.500 15 0 0 1 14.500 30A14.500 15 0 0 1 14.500 0ZM14.800 2.300C11 2.300 7.500 7.500 7.500 15S11 27.700 14.800 27.700S21.500 22.500 21.500 15S18.500 2.300 14.800 2.300Z" />
        </svg>
      </button>
      <button class="app" aria-label="Chrome">
        <svg width="30" height="30" viewBox="0 0 30 30">
          <circle cx="15" cy="15" r="15" fill="#fbc116" />
          <path fill="#e33b2e" d="M2 7.500A15 15 0 0 1 28 7.500H15A7.500 7.500 0 0 0 8.500 18.750Z" />
          <path fill="#229342" d="M2 7.500A15 15 0 0 0 15 30L21.500 18.750A7.500 7.500 0 0 1 8.500 18.750Z" />
          <circle cx="15" cy="15" r="7.500" fill="#fff" />
          <circle cx="15" cy="15" r="6" fill="#3079e8" />
        </svg>
      </button>
      <div class="tray">
        <button class="mini" aria-label="Hidden icons">
          <svg width="16" height="9" viewBox="0 0 16 9" fill="none" stroke="#fff" stroke-width="1.300"><path d="M0.500 8.500L8 1L15.500 8.500" /></svg>
        </button>
        <button class="mini" aria-label="Battery">
          <svg width="20" height="14" viewBox="0 0 20 14" fill="none" stroke="#fff"><path d="M7 2.500H17.500V12.500H3.500V8M17.500 5.500H19.500V9.500H17.500" /><path d="M8 4.500H16V11H5.500V8H8Z" fill="#fff" stroke="none" /><path d="M1.500 0V2.500M4.500 0V2.500M0.500 2.500H5.500V5.500H0.500ZM3 5.500V8" /></svg>
        </button>
        <button class="mini" aria-label="Volume">
          <svg width="20" height="18" viewBox="0 0 20 18" fill="none" stroke="#fff" stroke-width="1.200"><path d="M0.600 6H3L7 2.500V15.500L3 12H0.600Z" /><path d="M10 7Q11.300 9 10 11M12.800 4.800Q15.500 9 12.800 13.200" /><path d="M16 1.500Q21 9 16 16.500" opacity="0.500" /></svg>
        </button>
        <button class="mini" aria-label="Network">
          <svg width="17" height="17" viewBox="0 0 17 17" fill="none" stroke="#fff" stroke-width="1.200"><path d="M0.800 16A15 15 0 0 1 16 1.200" opacity="0.700" /><path d="M4.500 16A11.500 11.500 0 0 1 16 5M8 16A8 8 0 0 1 16 8.700M11.300 16A5 5 0 0 1 16 12.200" /><circle cx="14.500" cy="15" r="1.500" fill="#fff" stroke="none" /></svg>
        </button>
        <button class="lang">ENG</button>
        <time class="clock"><div>13:54</div><div>19.04.2024</div></time>
        <button class="notes" aria-label="Notifications">
          <svg width="20" height="20" viewBox="0 0 20 20"><path fill="#fff" d="M0 0H20V17H13L9.500 20V17H0Z" /><path d="M4 4.500H16M4 8.500H16M4 12.500H12" stroke="#463c4a" stroke-width="1.300" /></svg>
          <span class="count">3</span>
        </button>
      </div>
    `;
  }
}

/* ---------- desktop ---------- */

@customElement("app-root")
class AppRoot extends LitElement {
  static styles = [
    base,
    css`
      :host {
        display: flex;
        flex-direction: column;
        min-height: 100vh;
        background: #d7e1e9;
      }
      .browser {
        flex: 1;
        display: flex;
        gap: 5px;
        padding: 0 0 2px 1px;
      }
      side-panel {
        width: 60px;
        flex: none;
        margin-top: 1px;
      }
      .view {
        flex: 1;
        min-width: 0;
        display: flex;
        flex-direction: column;
        gap: 5px;
      }
      site-page {
        flex: 1;
      }
    `,
  ];

  render() {
    return html`
      <div class="browser">
        <side-panel></side-panel>
        <div class="view">
          <browser-chrome></browser-chrome>
          <site-page></site-page>
        </div>
      </div>
      <task-bar></task-bar>
    `;
  }
}
